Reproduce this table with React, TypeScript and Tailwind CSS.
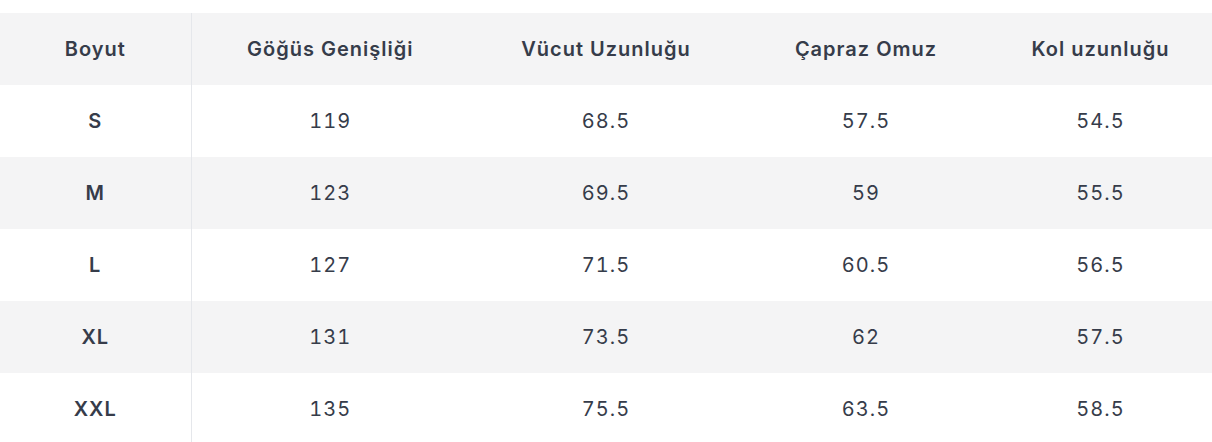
const headers = ["Boyut", "Göğüs Genişliği", "Vücut Uzunluğu", "Çapraz Omuz", "Kol uzunluğu"];

const rows = [
  ["S", "119", "68.5", "57.5", "54.5"],
  ["M", "123", "69.5", "59", "55.5"],
  ["L", "127", "71.5", "60.5", "56.5"],
  ["XL", "131", "73.5", "62", "57.5"],
  ["XXL", "135", "75.5", "63.5", "58.5"],
];

const widths = ["w-[191px]", "w-[278px]", "w-[274px]", "w-[246px]", "w-[223px]"];

export default function App() {
  return (
    <div className="w-[1212px] bg-white pt-[13px] font-['Inter',sans-serif] text-[#363c4a] tracking-[1px]">
      <table className="w-full border-collapse table-fixed">
        <colgroup>
          {widths.map((w, i) => (
            <col key={i} className={w} />
          ))}
        </colgroup>
        <thead>
          <tr className="h-[72px] bg-[#f4f4f5]">
            {headers.map((h, i) => (
              <th
                key={h}
                className={`text-center text-[20px] font-semibold p-0 ${
                  i === 0 ? "border-r border-[#e5e7eb]" : ""
                }`}
              >
                {h}
              </th>
            ))}
          </tr>
        </thead>
        <tbody>
          {rows.map((r, ri) => (
            <tr key={r[0]} className={`h-[72px] ${ri % 2 === 1 ? "bg-[#f4f4f5]" : "bg-white"}`}>
              {r.map((c, ci) => (
                <td
                  key={ci}
                  className={`text-center text-[20px] p-0 ${
                    ci === 0 ? "font-semibold border-r border-[#e5e7eb]" : "font-normal tabular-nums"
                  }`}
                >
                  {c}
                </td>
              ))}
            </tr>
          ))}
        </tbody>
      </table>
    </div>
  );
}
